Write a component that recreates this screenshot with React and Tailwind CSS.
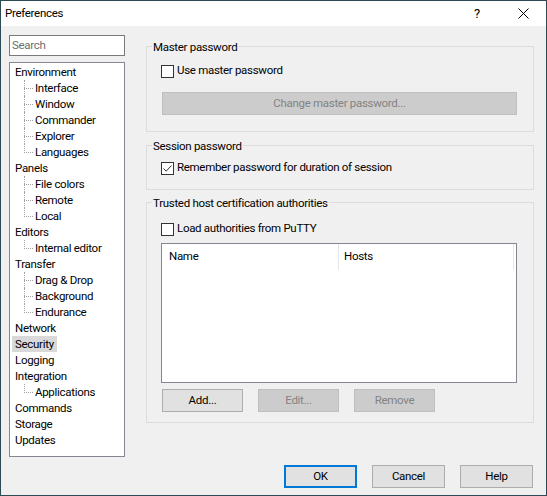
import React from "react";

const tree = [
  ["Environment", ["Interface", "Window", "Commander", "Explorer", "Languages"]],
  ["Panels", ["File colors", "Remote", "Local"]],
  ["Editors", ["Internal editor"]],
  ["Transfer", ["Drag & Drop", "Background", "Endurance"]],
  ["Network"],
  ["Security"],
  ["Logging"],
  ["Integration", ["Applications"]],
  ["Commands"],
  ["Storage"],
  ["Updates"],
];

const Checkbox = ({ checked, label }) => (
  <div className="flex items-center h-[16px] gap-[3px]">
    <span className="w-[13px] h-[13px] border border-[#333333] bg-white flex items-center justify-center shrink-0">
      {checked && (
        <svg width="11" height="11" viewBox="0 0 11 11">
          <path d="M1.5 5.5 L4.2 8.2 L9.5 2.5" fill="none" stroke="#333333" strokeWidth="1" />
        </svg>
      )}
    </span>
    <span>{label}</span>
  </div>
);

const Button = ({ children, disabled, primary, className = "" }) => {
  let cls = "border border-[#adadad] bg-[#e1e1e1] text-black";
  if (disabled) cls = "border border-[#bfbfbf] bg-[#cccccc] text-[#838383]";
  if (primary) cls = "border-2 border-[#0078d7] bg-[#e1e1e1] text-black";
  return (
    <div className={`h-[23px] flex items-center justify-center shrink-0 ${cls} ${className}`}>
      {children}
    </div>
  );
};

const Group = ({ title, className = "", children }) => (
  <div className={`border border-[#dcdcdc] ${className}`}>
    <div className="-mt-[8px] ml-[5px] w-fit bg-[#f0f0f0] px-[1px] leading-[16px]">{title}</div>
    {children}
  </div>
);

const TreeChild = ({ label, last }) => (
  <div className="flex items-center h-[16px] pl-[14px]">
    <span className="relative w-[9px] h-full shrink-0">
      <span
        className={`absolute left-0 top-0 border-l border-dotted border-[#a0a0a0] ${last ? "h-[9px]" : "h-full"}`}
      />
      <span className="absolute left-0 top-[8px] w-[9px] border-t border-dotted border-[#a0a0a0]" />
    </span>
    <span className="px-[2px] leading-[16px]">{label}</span>
  </div>
);

export default function App() {
  return (
    <div
      className="w-[547px] h-[496px] border border-[#2c4a54] bg-[#f0f0f0] flex flex-col text-[11.5px] tracking-[-0.3px] text-black select-none"
      style={{ fontFamily: "Roboto, sans-serif" }}
    >
      <div className="h-[25px] bg-white flex items-center shrink-0">
        <span className="pl-[4px] flex-1">Preferences</span>
        <span className="w-[46px] text-center text-[13px]">?</span>
        <span className="w-[46px] flex items-center justify-center">
          <svg width="11" height="11" viewBox="0 0 11 11">
            <path d="M0.5 0.5 L10.5 10.5 M10.5 0.5 L0.5 10.5" stroke="#000" strokeWidth="1" />
          </svg>
        </span>
      </div>

      <div className="flex-1 flex min-h-0">
        <div className="ml-[8px] pt-[9px] w-[116px] flex flex-col">
          <div className="h-[21px] border border-[#7a7a7a] bg-white flex items-center pl-[2px] text-[#6d6d6d]">
            Search
          </div>
          <div className="mt-[6px] h-[395px] border border-[#828790] bg-white pt-[1px]">
            {tree.map(([name, kids]) => (
              <div key={name}>
                <div className="flex items-center h-[16px] pl-[2px]">
                  <span className={`px-[3px] leading-[16px] ${name === "Security" ? "bg-[#d9d9d9]" : ""}`}>
                    {name}
                  </span>
                </div>
                {kids &&
                  kids.map((k, i) => <TreeChild key={k} label={k} last={i === kids.length - 1} />)}
              </div>
            ))}
          </div>
        </div>

        <div className="ml-[21px] mr-[12px] pt-[20px] flex-1 flex flex-col">
          <Group title="Master password" className="pb-[16px]">
            <div className="mt-[8px] pl-[14px]">
              <Checkbox label="Use master password" />
            </div>
            <Button disabled className="mt-[13px] ml-[15px] w-[355px]">
              Change master password...
            </Button>
          </Group>

          <Group title="Session password" className="mt-[13px] pb-[13px]">
            <div className="mt-[6px] pl-[14px]">
              <Checkbox checked label="Remember password for duration of session" />
            </div>
          </Group>

          <Group title="Trusted host certification authorities" className="mt-[12px] pb-[10px]">
            <div className="mt-[10px] pl-[14px]">
              <Checkbox label="Load authorities from PuTTY" />
            </div>
            <div className="mt-[6px] ml-[14px] w-[356px] h-[140px] border border-[#828790] bg-white">
              <div className="flex h-[26px]">
                <div className="w-[177px] pl-[7px] flex items-center border-r border-[#e5e5e5]">Name</div>
                <div className="w-[175px] pl-[5px] flex items-center border-r border-[#e5e5e5]">Hosts</div>
              </div>
            </div>
            <div className="mt-[6px] ml-[15px] flex gap-[15px]">
              <Button className="w-[81px]">Add...</Button>
              <Button disabled className="w-[81px]">Edit...</Button>
              <Button disabled className="w-[81px]">Remove</Button>
            </div>
          </Group>
        </div>
      </div>

      <div className="flex justify-end gap-[15px] pr-[13px] pb-[7px] shrink-0">
        <Button primary className="w-[73px]">OK</Button>
        <Button className="w-[73px]">Cancel</Button>
        <Button className="w-[73px]">Help</Button>
      </div>
    </div>
  );
}
